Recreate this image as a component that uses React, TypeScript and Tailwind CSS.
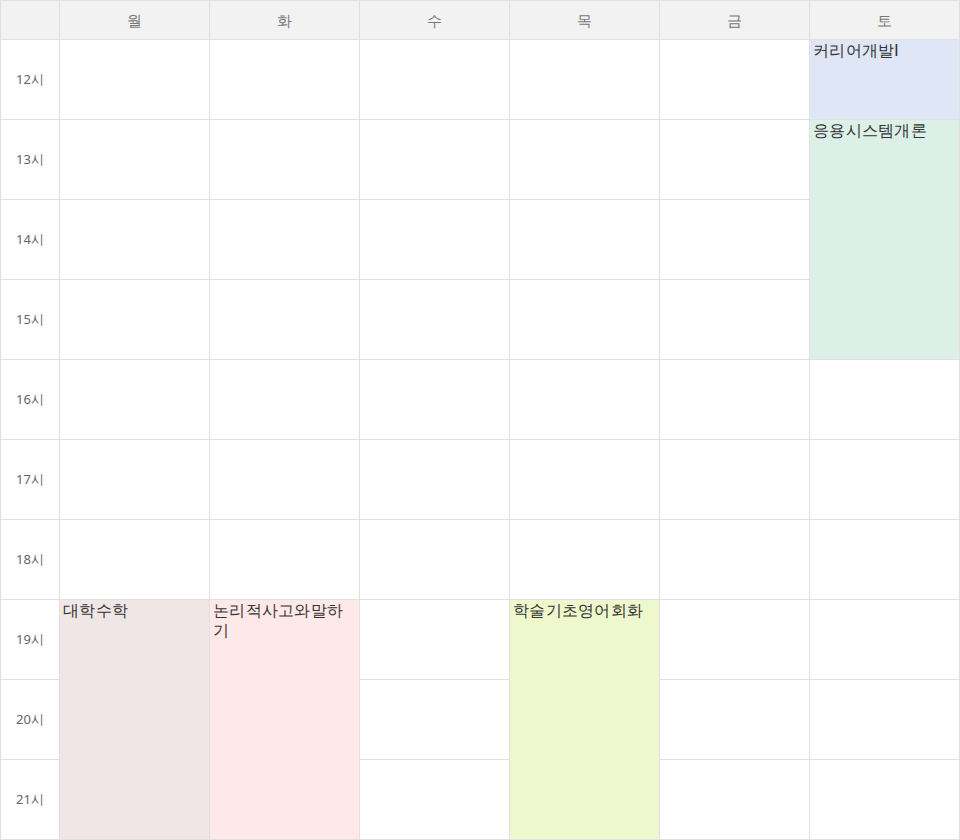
const days = ["월", "화", "수", "목", "금", "토"];
const hours = [12, 13, 14, 15, 16, 17, 18, 19, 20, 21];

type Ev = { day: number; start: number; span: number; title: string; bg: string };
const events: Ev[] = [
  { day: 5, start: 12, span: 1, title: "커리어개발Ⅰ", bg: "bg-[#dfe7f6]" },
  { day: 5, start: 13, span: 3, title: "응용시스템개론", bg: "bg-[#dcf0e7]" },
  { day: 0, start: 19, span: 3, title: "대학수학", bg: "bg-[#f0e6e6]" },
  { day: 1, start: 19, span: 3, title: "논리적사고와말하기", bg: "bg-[#ffe8e8]" },
  { day: 3, start: 19, span: 3, title: "학술기초영어회화", bg: "bg-[#eef8cc]" },
];

function covered(day: number, h: number) {
  return events.some((e) => e.day === day && h >= e.start && h < e.start + e.span);
}

export default function App() {
  return (
    <div className="grid w-[960px] h-[840px] grid-cols-[58px_repeat(6,149px)] grid-rows-[38px_repeat(10,79px)] gap-px p-px bg-[#e0e0e0] font-['Noto_Sans_CJK_KR','Noto_Sans',sans-serif]">
      <div className="bg-[#f2f2f2]" />
      {days.map((d) => (
        <div key={d} className="bg-[#f2f2f2] flex items-center justify-center text-[15px] text-[#777]">
          {d}
        </div>
      ))}
      {hours.map((h, r) => (
        <>
          <div
            key={"t" + h}
            className="bg-white flex items-center justify-center text-[13px] text-[#666]"
            style={{ gridRow: r + 2, gridColumn: 1 }}
          >
            {h}시
          </div>
          {days.map((_, c) =>
            covered(c, h) ? null : (
              <div key={h + "-" + c} className="bg-white" style={{ gridRow: r + 2, gridColumn: c + 2 }} />
            )
          )}
        </>
      ))}
      {events.map((e) => (
        <div
          key={e.title}
          className={`${e.bg} px-[3px] text-[15.5px] leading-[20px] tracking-[0.3px] text-[#333]`}
          style={{ gridColumn: e.day + 2, gridRow: `${e.start - 12 + 2} / span ${e.span}` }}
        >
          {e.title}
        </div>
      ))}
    </div>
  );
}
